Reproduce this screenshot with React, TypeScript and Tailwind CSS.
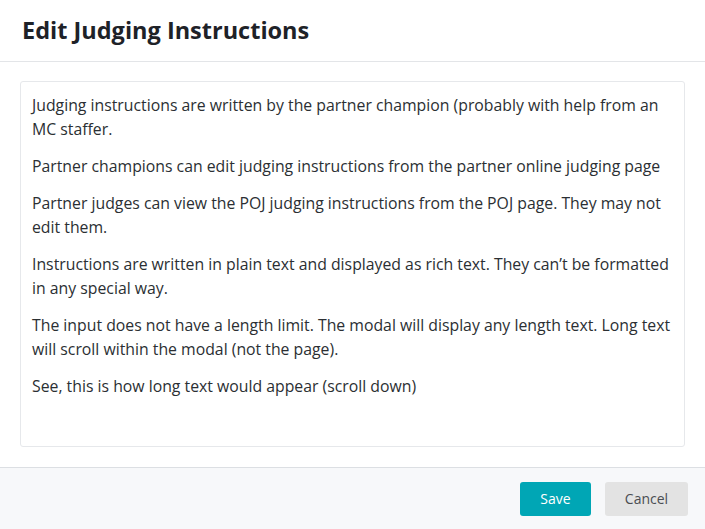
import React from "react";

const paragraphs = [
  "Judging instructions are written by the partner champion (probably with help from an MC staffer.",
  "Partner champions can edit judging instructions from the partner online judging page",
  "Partner judges can view the POJ judging instructions from the POJ page. They may not edit them.",
  "Instructions are written in plain text and displayed as rich text. They can\u2019t be formatted in any special way.",
  "The input does not have a length limit. The modal will display any length text. Long text will scroll within the modal (not the page).",
  "See, this is how long text would appear (scroll down)",
];

export default function App() {
  return (
    <div
      className="w-[705px] h-[529px] bg-white flex flex-col overflow-hidden"
      style={{ fontFamily: '"Open Sans", "Noto Sans", sans-serif' }}
    >
      <div className="h-[62px] shrink-0 border-b border-[#e3e5e8] flex items-center px-[22px]">
        <h1 className="text-[23.5px] font-bold text-[#1e2228] leading-none">Edit Judging Instructions</h1>
      </div>
      <div className="flex-1 px-[20px] pt-[19px] pb-[20px] flex flex-col">
        <div className="flex-1 border border-[#e6e8eb] rounded-[3px] px-[11px] pt-[11px] flex flex-col gap-[13px] text-[15.8px] leading-[24px] text-[#2b2f33]">
          {paragraphs.map((p, i) => (
            <p key={i}>{p}</p>
          ))}
        </div>
      </div>
      <div className="h-[62px] shrink-0 border-t border-[#dcdfe3] bg-[#f7f8fa] flex items-center justify-end gap-[14px] pr-[17px]">
        <button className="w-[71px] h-[34px] rounded-[3px] bg-[#00a6b5] text-white text-[14px]">Save</button>
        <button className="w-[83px] h-[34px] rounded-[3px] bg-[#e3e3e3] text-[#4a4d52] text-[14px]">Cancel</button>
      </div>
    </div>
  );
}
